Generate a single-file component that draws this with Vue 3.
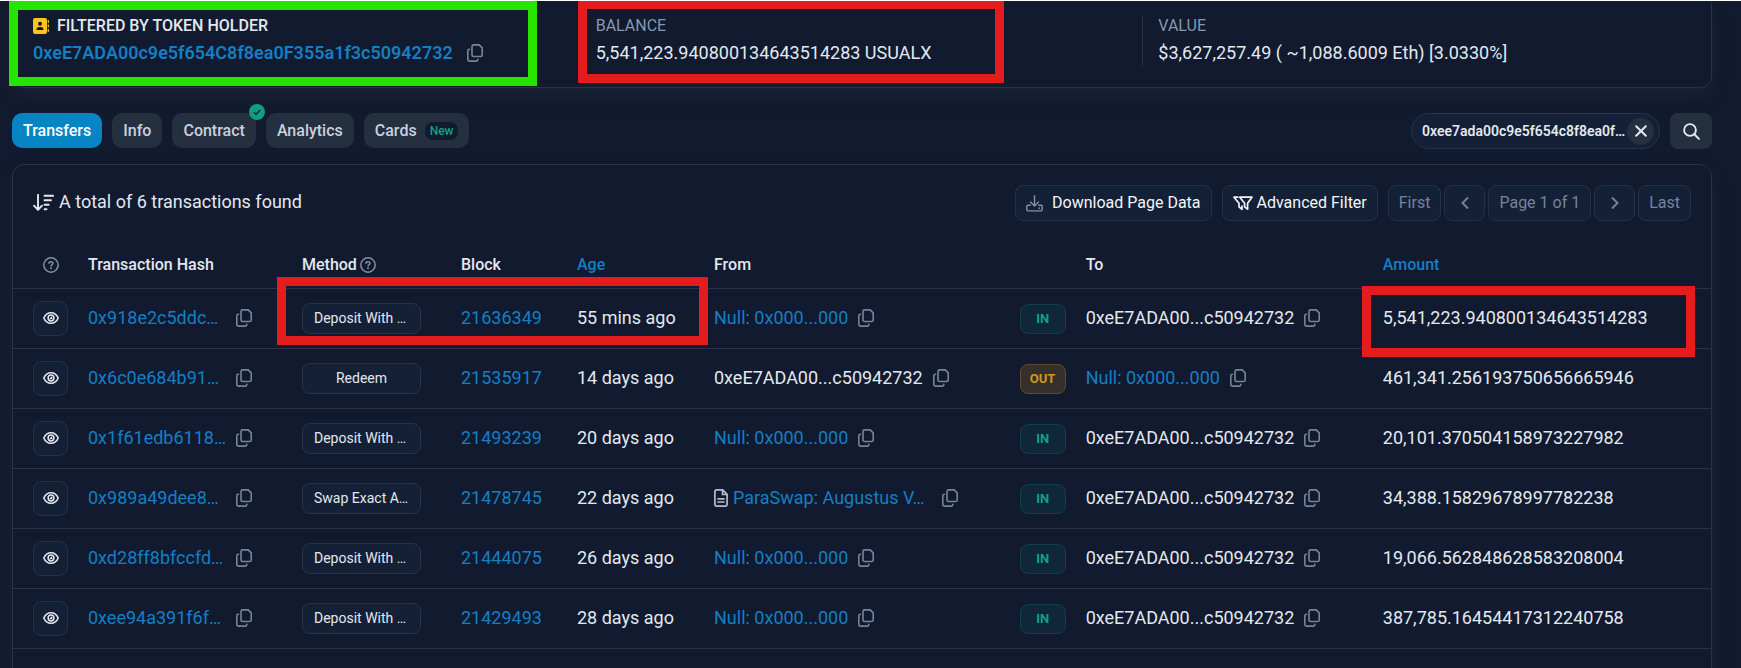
<script setup>
import { ref } from 'vue'

const holder = '0xeE7ADA00c9e5f654C8f8ea0F355a1f3c50942732'
const query = ref('0xee7ada00c9e5f654c8f8ea0f…')

const tabs = [
  { label: 'Transfers', active: true },
  { label: 'Info' },
  { label: 'Contract', verified: true },
  { label: 'Analytics' },
  { label: 'Cards', badge: 'New' },
]

const zero = { text: 'Null: 0x000...000', link: true }
const self = { text: '0xeE7ADA00...c50942732' }

const rows = [
  { hash: '0x918e2c5ddc…', method: 'Deposit With …', block: '21636349', age: '55 mins ago', from: zero, dir: 'IN', to: self, amount: '5,541,223.940800134643514283' },
  { hash: '0x6c0e684b91…', method: 'Redeem', block: '21535917', age: '14 days ago', from: self, dir: 'OUT', to: zero, amount: '461,341.256193750656665946' },
  { hash: '0x1f61edb6118…', method: 'Deposit With …', block: '21493239', age: '20 days ago', from: zero, dir: 'IN', to: self, amount: '20,101.370504158973227982' },
  { hash: '0x989a49dee8…', method: 'Swap Exact A…', block: '21478745', age: '22 days ago', from: { text: 'ParaSwap: Augustus V…', link: true, contract: true }, dir: 'IN', to: self, amount: '34,388.15829678997782238' },
  { hash: '0xd28ff8bfccfd…', method: 'Deposit With …', block: '21444075', age: '26 days ago', from: zero, dir: 'IN', to: self, amount: '19,066.562848628583208004' },
  { hash: '0xee94a391f6f…', method: 'Deposit With …', block: '21429493', age: '28 days ago', from: zero, dir: 'IN', to: self, amount: '387,785.16454417312240758' },
]
</script>

<template>
  <div class="page">
    <svg class="defs" aria-hidden="true">
      <symbol id="copy" viewBox="0 0 16 18">
        <path d="M6.6 .9h5.6l3 3v7a1.6 1.6 0 0 1-1.6 1.6h-7A1.6 1.6 0 0 1 5 10.900V2.500A1.6 1.6 0 0 1 6.600.9zM2.600 5.200H2.400A1.600 1.600 0 0 0 .8 6.800v8.700a1.600 1.600 0 0 0 1.600 1.600h6.800a1.600 1.600 0 0 0 1.600-1.600v-.3" fill="none" stroke="currentColor" stroke-width="1.600" stroke-linecap="round" stroke-linejoin="round" />
      </symbol>
      <symbol id="help" viewBox="0 0 16 16">
        <circle cx="8" cy="8" r="7.200" fill="none" stroke="currentColor" stroke-width="1.500" />
        <path d="M6 6.300c0-2 4-2.100 4 0 0 1.300-1.900 1.300-1.900 2.700" fill="none" stroke="currentColor" stroke-width="1.500" stroke-linecap="round" />
        <circle cx="8" cy="11.300" r="1" fill="currentColor" />
      </symbol>
      <symbol id="eye" viewBox="0 0 16 14">
        <path d="M.8 7C2.200 3.700 4.800 1.700 8 1.700S13.800 3.700 15.200 7C13.800 10.300 11.200 12.300 8 12.300S2.200 10.300.8 7z" fill="none" stroke="currentColor" stroke-width="1.600" stroke-linejoin="round" />
        <circle cx="8" cy="7" r="2.900" fill="none" stroke="currentColor" stroke-width="1.500" />
        <path d="M8 5.600a1.400 1.400 0 1 1-1.400 1.400c.9.200 1.500-.5 1.400-1.400z" fill="currentColor" />
      </symbol>
    </svg>

    <section class="card holder">
      <div class="stat">
        <div class="stat-label strong">
          <svg class="book" viewBox="0 0 16 16" aria-hidden="true">
            <path d="M2 0h10a2 2 0 0 1 2 2v12a2 2 0 0 1-2 2H2a2 2 0 0 1-2-2V2a2 2 0 0 1 2-2zM14.700 2h.7q.5 0 .5.500v2q0 .5-.5.5h-.7zM14.700 6.500h.7q.5 0 .5.500v2q0 .5-.5.500h-.7zM14.700 11h.7q.5 0 .5.500v2q0 .5-.5.500h-.7z" fill="#ffc41f" />
            <circle cx="7" cy="5.800" r="2" fill="#111a2e" />
            <path d="M3.600 12a2.700 2.700 0 0 1 2.700-3h1.400a2.700 2.700 0 0 1 2.700 3z" fill="#111a2e" />
          </svg>
          <span>FILTERED BY TOKEN HOLDER</span>
        </div>
        <div class="stat-value">
          <a class="link address" href="#">{{ holder }}</a>
          <button class="copy" type="button" aria-label="Copy address"><svg class="i-copy"><use href="#copy" /></svg></button>
        </div>
      </div>
      <div class="stat">
        <div class="stat-label">BALANCE</div>
        <div class="stat-value">5,541,223.940800134643514283 USUALX</div>
      </div>
      <div class="stat">
        <div class="stat-label">VALUE</div>
        <div class="stat-value">$3,627,257.49 ( ~1,088.6009 Eth) [3.0330%]</div>
      </div>
    </section>

    <div class="tabbar">
      <nav class="tabs">
        <button v-for="t in tabs" :key="t.label" type="button" class="tab" :class="{ active: t.active }">
          {{ t.label }}
          <span v-if="t.badge" class="new">{{ t.badge }}</span>
          <svg v-if="t.verified" class="verified" viewBox="0 0 16 16" aria-hidden="true">
            <circle cx="8" cy="8" r="8" fill="#0f9f80" />
            <path d="M4.800 8.200l2.200 2.200 4.200-4.400" fill="none" stroke="#111a2e" stroke-width="1.200" />
          </svg>
        </button>
      </nav>
      <form class="search" @submit.prevent>
        <div class="pill">
          <input v-model="query" type="text" aria-label="Token holder filter" />
          <button type="button" class="clear" aria-label="Clear filter">
            <svg viewBox="0 0 12 12"><path d="M1.200 1.200l9.600 9.600M10.800 1.200l-9.600 9.600" stroke="currentColor" stroke-width="2" stroke-linecap="round" /></svg>
          </button>
        </div>
        <button type="submit" class="go" aria-label="Search">
          <svg viewBox="0 0 17 17"><circle cx="7" cy="7" r="5.900" fill="none" stroke="currentColor" stroke-width="1.900" /><path d="M11.300 11.300l4.600 4.600" stroke="currentColor" stroke-width="2" stroke-linecap="round" /></svg>
        </button>
      </form>
    </div>

    <section class="card panel">
      <div class="toolbar">
        <div class="total">
          <svg class="sort" viewBox="0 0 21 17" aria-hidden="true">
            <path d="M5 .8v15M1 11.700l4 4.200 4-4.200M11.500 1.800h8.700M11.500 6.300h6.500M11.500 10.800h4.200M11.500 15.300h2" fill="none" stroke="currentColor" stroke-width="1.900" stroke-linecap="round" stroke-linejoin="round" />
          </svg>
          <span>A total of 6 transactions found</span>
        </div>
        <div class="actions">
          <button type="button" class="btn download">
            <svg viewBox="0 0 17 17" aria-hidden="true"><path d="M8.500.8v9.700M4.500 7l4 4 4-4M4.300 10.300H1.900q-1.100 0-1.100 1.100v3.400q0 1.100 1.100 1.100h13.200q1.100 0 1.100-1.100v-3.400q0-1.100-1.100-1.100h-2.400" fill="none" stroke="currentColor" stroke-width="1.400" stroke-linecap="round" stroke-linejoin="round" /><circle cx="13.300" cy="13.200" r=".9" fill="currentColor" /></svg>
            Download Page Data
          </button>
          <button type="button" class="btn filter">
            <svg viewBox="0 0 20 15" aria-hidden="true"><path d="M6.800 1.200H19l-4.400 6v6l-3-2.400V7.200zM4.800 1.200H1l5 6v3.600l3 2.600V10" fill="none" stroke="currentColor" stroke-width="1.700" stroke-linejoin="round" stroke-linecap="round" /></svg>
            Advanced Filter
          </button>
          <div class="pager">
            <button type="button" class="btn muted">First</button>
            <button type="button" class="btn muted step" aria-label="Previous page"><svg viewBox="0 0 8 14"><path d="M7 1.500L1.500 7 7 12.500" fill="none" stroke="currentColor" stroke-width="1.900" /></svg></button>
            <span class="btn muted">Page 1 of 1</span>
            <button type="button" class="btn muted step" aria-label="Next page"><svg viewBox="0 0 8 14"><path d="M1 1.500L6.500 7 1 12.500" fill="none" stroke="currentColor" stroke-width="1.900" /></svg></button>
            <button type="button" class="btn muted">Last</button>
          </div>
        </div>
      </div>

      <table>
        <colgroup>
          <col class="c-view" /><col class="c-hash" /><col class="c-method" /><col class="c-block" /><col class="c-age" />
          <col class="c-from" /><col class="c-dir" /><col class="c-to" /><col />
        </colgroup>
        <thead>
          <tr>
            <th class="first"><span class="helpcell"><svg class="i-help"><use href="#help" /></svg></span></th>
            <th>Transaction Hash</th>
            <th><span class="cell tight">Method <svg class="i-help"><use href="#help" /></svg></span></th>
            <th>Block</th>
            <th><a class="link" href="#">Age</a></th>
            <th>From</th>
            <th></th>
            <th>To</th>
            <th><a class="link" href="#">Amount</a></th>
          </tr>
        </thead>
        <tbody>
          <tr v-for="r in rows" :key="r.hash">
            <td class="first"><button type="button" class="view" aria-label="Preview transaction"><svg><use href="#eye" /></svg></button></td>
            <td class="text">
              <span class="cell">
                <a class="link hash" href="#">{{ r.hash }}</a>
                <button class="copy" type="button" aria-label="Copy hash"><svg class="i-copy"><use href="#copy" /></svg></button>
              </span>
            </td>
            <td><span class="method" :class="{ clipped: r.method.endsWith('…') }">{{ r.method }}</span></td>
            <td class="text"><a class="link" href="#">{{ r.block }}</a></td>
            <td class="text">{{ r.age }}</td>
            <td class="text">
              <span class="cell">
                <svg v-if="r.from.contract" class="doc" viewBox="0 0 14 18" aria-hidden="true"><path d="M2.500.9h6.200l4.400 4.400v10.200a1.600 1.600 0 0 1-1.600 1.600h-9A1.600 1.600 0 0 1 .9 15.500v-13A1.600 1.600 0 0 1 2.500.9zM8.500 1v4.500H13M4 9.800h6M4 13h6" fill="none" stroke="currentColor" stroke-width="1.700" stroke-linejoin="round" stroke-linecap="round" /></svg>
                <a v-if="r.from.link" class="link" :class="{ named: r.from.contract }" href="#">{{ r.from.text }}</a>
                <span v-else>{{ r.from.text }}</span>
                <button class="copy" type="button" aria-label="Copy sender"><svg class="i-copy"><use href="#copy" /></svg></button>
              </span>
            </td>
            <td><span class="dir" :class="r.dir.toLowerCase()">{{ r.dir }}</span></td>
            <td class="text">
              <span class="cell">
                <a v-if="r.to.link" class="link" href="#">{{ r.to.text }}</a>
                <span v-else>{{ r.to.text }}</span>
                <button class="copy" type="button" aria-label="Copy recipient"><svg class="i-copy"><use href="#copy" /></svg></button>
              </span>
            </td>
            <td class="text">{{ r.amount }}</td>
          </tr>
        </tbody>
      </table>
    </section>

    <div class="mark mark-holder"></div>
    <div class="mark mark-balance"></div>
    <div class="mark mark-method"></div>
    <div class="mark mark-amount"></div>
  </div>
</template>

<style>
body {
  margin: 0;
  background: #111a2e;
}
</style>

<style scoped>
* {
  box-sizing: border-box;
}
.page {
  position: relative;
  height: 100vh;
  overflow: hidden;
  padding: 0 29px 0 12px;
  border-top: 1px solid #fff;
  background: #111a2e;
  color: #e3e8ef;
  font: 400 18px/28px Roboto, "Liberation Sans", sans-serif;
}
.defs {
  position: absolute;
  width: 0;
  height: 0;
}
button,
input {
  font: inherit;
  color: inherit;
  margin: 0;
  padding: 0;
  border: 0;
  background: none;
}
svg {
  display: block;
  flex: none;
}
.link {
  color: #147fc4;
  text-decoration: none;
}
.card {
  border: 1px solid #283346;
  border-radius: 12px;
  background: #111a2e;
  box-shadow: 0 8px 19px rgba(82, 85, 92, 0.15);
}
.holder {
  display: grid;
  grid-template-columns: repeat(3, 1fr);
  margin-top: -8px;
  padding: 22px 6px 20px 4px;
}
.stat {
  padding: 0 16px;
}
.stat + .stat {
  border-left: 1px solid #283346;
  padding-left: 15px;
}
.stat-label {
  display: flex;
  align-items: center;
  gap: 8px;
  margin-bottom: 3px;
  color: #8798ae;
  font-size: 16px;
  line-height: 20px;
}
.stat-label.strong {
  color: #e3e8ef;
  font-weight: 500;
}
.address {
  font-weight: 600;
}
.book {
  width: 16px;
  height: 16px;
}
.stat-value {
  display: flex;
  align-items: center;
  gap: 14px;
  white-space: nowrap;
}
.copy {
  display: block;
  color: #76849a;
}
.i-copy {
  width: 16px;
  height: 18px;
}
.i-help {
  width: 16px;
  height: 16px;
  color: #8291a6;
}
.tabbar {
  display: flex;
  justify-content: space-between;
  margin: 25px 0 15px;
  font-size: 16px;
}
.tabs {
  display: flex;
  gap: 10px;
}
.tab {
  position: relative;
  display: flex;
  align-items: center;
  gap: 8px;
  height: 35px;
  padding: 0 11px;
  border-radius: 10px;
  background: #242f40;
  color: #c8d1dd;
  font-weight: 500;
}
.tab.active {
  background: #0784c3;
  color: #fff;
}
.new {
  padding: 0 5px;
  border-radius: 8px;
  background: #111a2e;
  color: #12a182;
  font-size: 12px;
  line-height: 18px;
}
.verified {
  position: absolute;
  top: -9px;
  right: -9px;
  width: 16px;
  height: 16px;
}
.search {
  display: flex;
  gap: 10px;
}
.pill {
  display: flex;
  align-items: center;
  width: 249px;
  height: 36px;
  padding: 0 5px 0 10px;
  border: 1px solid #283346;
  border-radius: 18px;
  background: #142036;
}
.pill input {
  flex: 1;
  min-width: 0;
  font-size: 14px;
  font-weight: 600;
  outline: 0;
}
.clear {
  display: grid;
  place-items: center;
  width: 27px;
  height: 27px;
  border-radius: 50%;
  background: #242f40;
}
.clear svg {
  width: 12px;
  height: 12px;
}
.go {
  display: grid;
  place-items: center;
  width: 42px;
  height: 36px;
  border-radius: 8px;
  background: #242f40;
}
.go svg {
  width: 17px;
  height: 17px;
}
.panel {
  padding-bottom: 64px;
}
.toolbar {
  display: flex;
  align-items: center;
  justify-content: space-between;
  padding: 20px 20px 19px;
}
.total {
  display: flex;
  align-items: center;
  gap: 5px;
  padding-bottom: 2px;
}
.sort {
  width: 21px;
  height: 17px;
}
.actions {
  display: flex;
  gap: 10px;
  font-size: 16px;
}
.pager {
  display: flex;
  gap: 3px;
}
.btn {
  display: flex;
  align-items: center;
  gap: 9px;
  height: 36px;
  padding: 0 10px;
  border: 1px solid #233045;
  border-radius: 8px;
  background: #142036;
  white-space: nowrap;
}
.download,
.filter {
  color: #f3f6fa;
}
.download svg {
  width: 17px;
  height: 17px;
  color: #8291a6;
}
.filter {
  gap: 4px;
}
.filter svg {
  width: 20px;
  height: 15px;
}
.muted {
  color: #76849a;
}
.step {
  justify-content: center;
  width: 41px;
}
.step svg {
  width: 8px;
  height: 14px;
}
table {
  width: 100%;
  table-layout: fixed;
  border-collapse: separate;
  border-spacing: 0;
}
.c-view {
  width: 67px;
}
.c-hash {
  width: 214px;
}
.c-method {
  width: 159px;
}
.c-block {
  width: 116px;
}
.c-age {
  width: 137px;
}
.c-from {
  width: 18%;
}
.c-dir {
  width: 66px;
}
.c-to {
  width: 17.5%;
}
th,
td {
  padding: 0 0 0 8px;
  border-bottom: 1px solid #283346;
  text-align: left;
  vertical-align: middle;
  white-space: nowrap;
}
th {
  height: 49px;
  padding-top: 1px;
  font-size: 16px;
  font-weight: 500;
}
td {
  height: 60px;
}
td.text {
  padding-bottom: 2px;
}
.first {
  padding-left: 20px;
}
.cell {
  display: flex;
  align-items: center;
  gap: 10px;
}
.cell.tight {
  gap: 3px;
}
.helpcell {
  display: grid;
  place-items: center;
  width: 35px;
}
.hash {
  width: 138px;
}
.named {
  width: 199px;
}
.doc {
  width: 14px;
  height: 18px;
  margin-right: -5px;
  color: #b4bdc9;
}
.view {
  display: grid;
  place-items: center;
  width: 35px;
  height: 35px;
  padding-bottom: 2px;
  border: 1px solid #233045;
  border-radius: 8px;
  background: #142036;
}
.view svg {
  width: 16px;
  height: 14px;
}
.method {
  display: block;
  width: 119px;
  padding: 0 11px;
  border: 1px solid #283346;
  border-radius: 8px;
  background: #142036;
  font-size: 14px;
  line-height: 29px;
  text-align: center;
}
.method.clipped {
  text-align: left;
}
.dir {
  display: block;
  width: 46px;
  border: 1px solid #0f4046;
  border-radius: 8px;
  background: #10273a;
  color: #12a182;
  font-size: 13px;
  font-weight: 700;
  line-height: 28px;
  text-align: center;
}
.dir.out {
  border-color: #61492c;
  background: #35302c;
  color: #cc9a1e;
}
.mark {
  position: absolute;
  border: 9px solid #e51c1e;
  pointer-events: none;
}
.mark-holder {
  top: 0;
  left: 9px;
  width: 528px;
  height: 85px;
  border-color: #27e400;
}
.mark-balance {
  top: -1px;
  left: 578px;
  width: 426px;
  height: 83px;
}
.mark-method {
  top: 276px;
  left: 277px;
  width: 431px;
  height: 68px;
}
.mark-amount {
  top: 285px;
  left: 1362px;
  width: 333px;
  height: 71px;
}
</style>
